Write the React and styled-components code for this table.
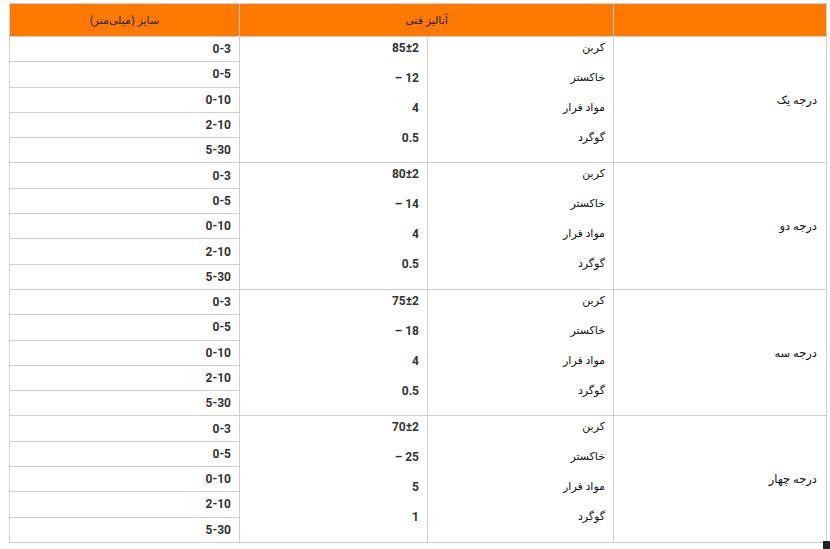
import React from "react";
import styled, { createGlobalStyle } from "styled-components";

const Global = createGlobalStyle`
  html, body { margin: 0; padding: 0; background: #fff; }
  body { font-family: Roboto, "DejaVu Sans", sans-serif; color: #333; }
`;

const Page = styled.div`
  padding: 3px 3px 0 9px;
`;

const Grid = styled.div`
  direction: rtl;
  display: grid;
  grid-template-columns: 212px 185px 187px 229px;
  grid-template-rows: 32px;
  grid-auto-rows: 24.3px;
  gap: 1px;
  background: #cfcfcf;
  border: 1px solid #cfcfcf;
  width: 816px;
`;

const HeadCell = styled.div`
  background: #ff7800;
  grid-column: span ${(p) => p.$span || 1};
  display: flex;
  align-items: center;
  justify-content: center;
  font-size: 11px;
  color: #222;
`;

const GradeCell = styled.div`
  background: #fff;
  grid-row: span 5;
  display: flex;
  align-items: center;
  padding-right: 9px;
  font-size: 11.5px;
  color: #111;
`;

const ListCell = styled.div`
  background: #fff;
  grid-row: span 5;
  display: flex;
  flex-direction: column;
  gap: 12px;
  padding: 2px 8px 0 8px;
  font-size: ${(p) => (p.$bold ? "12px" : "11px")};
  line-height: 18px;
  color: #111;
  font-weight: ${(p) => (p.$bold ? 700 : 400)};
`;

const Num = styled.span`
  direction: ltr;
  unicode-bidi: isolate;
  align-self: flex-start;
  color: #333;
`;

const SizeCell = styled.div`
  background: #fff;
  display: flex;
  align-items: center;
  padding-right: 8px;
  font-size: 12px;
  font-weight: 700;
  color: #333;
`;

const Corner = styled.div`
  position: fixed;
  right: 0;
  bottom: 0;
  width: 7px;
  height: 8px;
  background: #222;
`;

const labels = ["کربن", "خاکستر", "مواد فرار", "گوگرد"];
const sizes = ["0-3", "0-5", "0-10", "2-10", "5-30"];
const groups = [
  { name: "درجه یک", values: ["85±2", "– 12", "4", "0.5"] },
  { name: "درجه دو", values: ["80±2", "– 14", "4", "0.5"] },
  { name: "درجه سه", values: ["75±2", "– 18", "4", "0.5"] },
  { name: "درجه چهار", values: ["70±2", "– 25", "5", "1"] },
];

export default function App() {
  return (
    <Page>
      <Global />
      <Grid>
        <HeadCell />
        <HeadCell $span={2}>آنالیز فنی</HeadCell>
        <HeadCell>سایز (میلی‌متر)</HeadCell>
        {groups.map((g) => (
          <React.Fragment key={g.name}>
            <GradeCell>{g.name}</GradeCell>
            <ListCell>
              {labels.map((l) => (
                <span key={l}>{l}</span>
              ))}
            </ListCell>
            <ListCell $bold>
              {g.values.map((v, i) => (
                <Num key={i}>{v}</Num>
              ))}
            </ListCell>
            {sizes.map((s) => (
              <SizeCell key={s}>{s}</SizeCell>
            ))}
          </React.Fragment>
        ))}
      </Grid>
      <Corner />
    </Page>
  );
}
